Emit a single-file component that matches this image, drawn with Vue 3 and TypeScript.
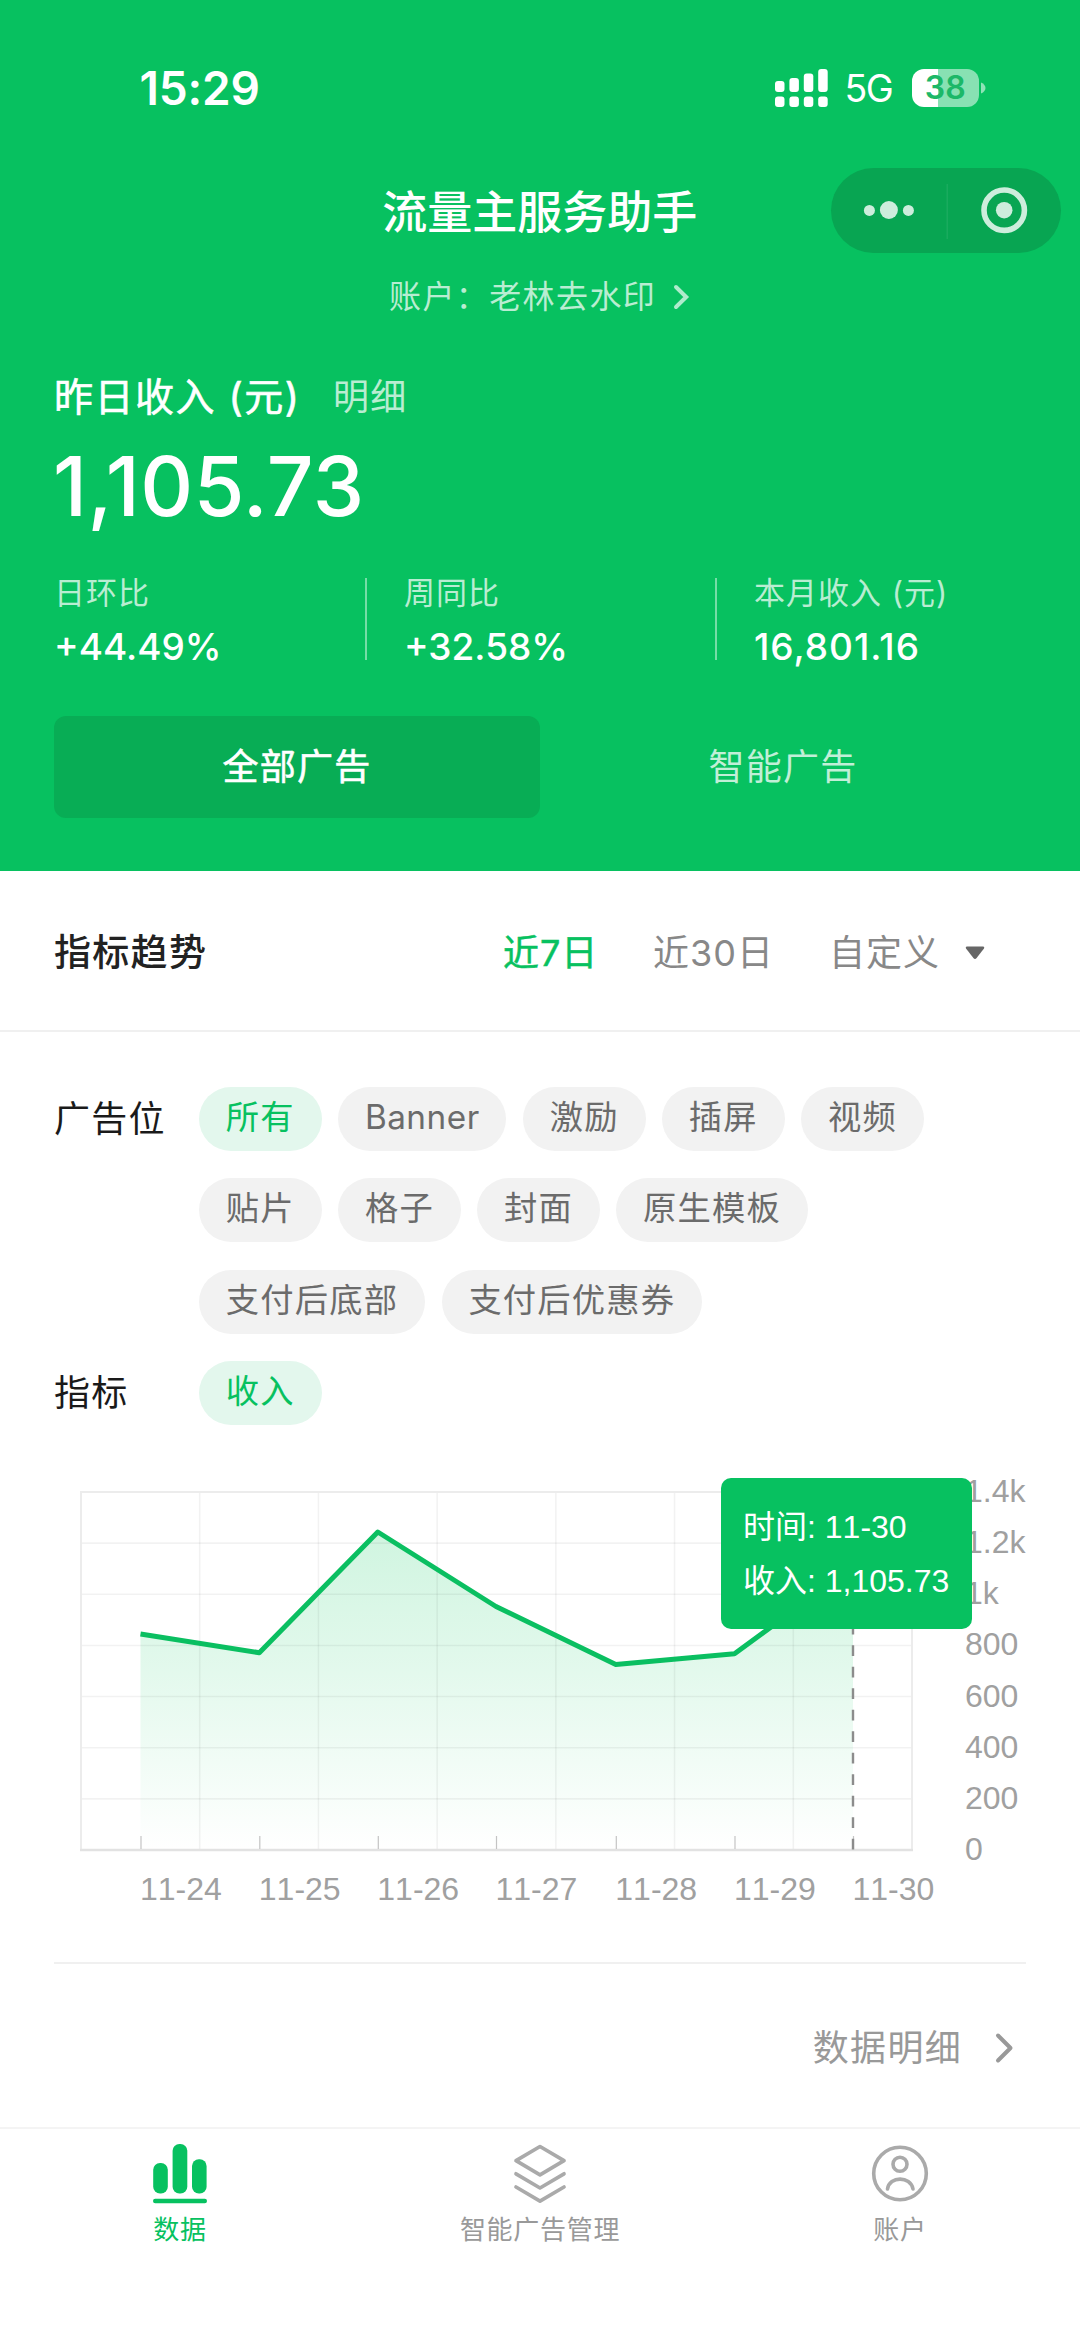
<script setup lang="ts">
interface Stat { label: string; value: string }
interface Point { day: string; x: number; y: number }

const stats: Stat[] = [
  { label: '日环比', value: '+44.49%' },
  { label: '周同比', value: '+32.58%' },
  { label: '本月收入 (元)', value: '16,801.16' },
]

const slotRows: string[][] = [
  ['所有', 'Banner', '激励', '插屏', '视频'],
  ['贴片', '格子', '封面', '原生模板'],
  ['支付后底部', '支付后优惠券'],
]
const activeSlot = '所有'

// Chart geometry, in the coordinates of the svg viewBox
const left = 81
const right = 912
const top = 32
const bottom = 390
const points: Point[] = [
  { day: '11-24', x: 140.5, y: 174 },
  { day: '11-25', x: 259.3, y: 192.7 },
  { day: '11-26', x: 377.8, y: 72 },
  { day: '11-27', x: 496, y: 146.5 },
  { day: '11-28', x: 615.8, y: 204.6 },
  { day: '11-29', x: 734.5, y: 193.7 },
  { day: '11-30', x: 853, y: 107 },
]
const yLabels: string[] = ['1.4k', '1.2k', '1k', '800', '600', '400', '200', '0']
const rowY = (i: number): number => top + (i * (bottom - top)) / 7
const colX = (i: number): number => left + (i * (right - left)) / 7
const linePath = points.map((p) => `${p.x},${p.y}`).join(' ')
const areaPath = `${points[0].x},${bottom} ${linePath} ${points[6].x},${bottom}`
</script>

<template>
  <div class="page">
    <header class="hero">
      <div class="status">
        <span class="clock">15:29</span>
        <div class="status-right">
          <svg class="signal" width="54" height="38" viewBox="0 0 54 38" fill="#fff">
            <rect x="0" y="12" width="9.5" height="11" rx="3" />
            <rect x="14.4" y="9" width="9.5" height="14" rx="3" />
            <rect x="28.8" y="4.5" width="9.5" height="18.5" rx="3" />
            <rect x="43.2" y="0" width="9.5" height="23" rx="3" />
            <rect x="0" y="27.5" width="9.5" height="10.5" rx="3" />
            <rect x="14.4" y="27.5" width="9.5" height="10.5" rx="3" />
            <rect x="28.8" y="27.5" width="9.5" height="10.5" rx="3" />
            <rect x="43.2" y="27.5" width="9.5" height="10.5" rx="3" />
          </svg>
          <span class="net">5G</span>
          <div class="battery"><span>38</span></div>
          <svg class="nub" width="5" height="12" viewBox="0 0 5 12"><path d="M0 0.5C6 3 6 9 0 11.5Z" fill="#fff" fill-opacity=".55" /></svg>
        </div>
      </div>

      <div class="nav">
        <h1>流量主服务助手</h1>
        <div class="capsule">
          <svg width="230" height="85" viewBox="0 0 230 85" fill="#fff" fill-opacity=".8">
            <circle cx="38.4" cy="42.4" r="5.5" />
            <circle cx="57.9" cy="42" r="9" />
            <circle cx="77.4" cy="42.4" r="5.5" />
            <rect x="115.5" y="16" width="1.5" height="55" fill-opacity=".07" />
            <circle cx="173.2" cy="42.2" r="20.2" fill="none" stroke="#fff" stroke-opacity=".8" stroke-width="5.6" />
            <circle cx="173.2" cy="42.2" r="8.3" />
          </svg>
        </div>
      </div>

      <div class="account">
        <span>账户：老林去水印</span>
        <svg width="18" height="28" viewBox="0 0 18 28"><path d="M3 4 13.2 14 3 24" fill="none" stroke="#fff" stroke-opacity=".68" stroke-width="4" stroke-linecap="round" /></svg>
      </div>

      <div class="income-head">
        <span class="income-title">昨日收入 (元)</span>
        <span class="income-link">明细</span>
      </div>
      <div class="income">1,105.73</div>

      <div class="stats">
        <div v-for="s in stats" :key="s.label" class="stat">
          <span class="stat-label">{{ s.label }}</span>
          <span class="stat-value">{{ s.value }}</span>
        </div>
      </div>

      <div class="tabs">
        <div class="tab on">全部广告</div>
        <div class="tab">智能广告</div>
      </div>
    </header>

    <section class="trend">
      <h2>指标趋势</h2>
      <span class="range on">近7日</span>
      <span class="range r30">近30日</span>
      <span class="range custom">自定义</span>
      <svg class="caret" width="20" height="14" viewBox="0 0 20 14"><path d="M2 .5H18Q20 1 18.8 2.8L11.6 12Q10 14 8.400 12L1.200 2.800Q0 1 2 .5Z" fill="#666" /></svg>
    </section>

    <section class="filters">
      <div class="filter">
        <span class="filter-label">广告位</span>
        <div class="chip-rows">
          <div v-for="(row, i) in slotRows" :key="i" class="chips">
            <span v-for="c in row" :key="c" class="chip" :class="{ on: c === activeSlot, latin: c === 'Banner' }">{{ c }}</span>
          </div>
        </div>
      </div>
      <div class="filter">
        <span class="filter-label">指标</span>
        <div class="chips"><span class="chip on">收入</span></div>
      </div>
    </section>

    <section class="chart">
      <svg width="1080" height="460" viewBox="0 0 1080 460">
        <defs>
          <linearGradient id="fill" gradientUnits="userSpaceOnUse" x1="0" y1="72" x2="0" y2="390">
            <stop offset="0" stop-color="#07c95c" stop-opacity=".19" />
            <stop offset=".4" stop-color="#07c95c" stop-opacity=".12" />
            <stop offset="1" stop-color="#07c95c" stop-opacity="0" />
          </linearGradient>
        </defs>
        <polygon :points="areaPath" fill="url(#fill)" />
        <g stroke="#000" stroke-opacity=".05" stroke-width="1.6">
          <line v-for="i in 6" :key="'h' + i" :x1="left" :x2="right" :y1="rowY(i)" :y2="rowY(i)" />
          <line v-for="i in 6" :key="'v' + i" :x1="colX(i)" :x2="colX(i)" :y1="top" :y2="bottom" />
        </g>
        <rect :x="left" :y="top" :width="right - left" :height="bottom - top" fill="none" stroke="#ececec" stroke-width="2" />
        <line :x1="left - 1" :x2="right + 1" :y1="bottom" :y2="bottom" stroke="#e2e2e2" stroke-width="2.4" />
        <g stroke="#c4c4c4" stroke-width="1.2">
          <line v-for="p in points" :key="p.day" :x1="p.x + 0.5" :x2="p.x + 0.5" y1="376" y2="389" />
        </g>
        <line x1="853" x2="853" y1="389.500" y2="107" stroke="#8c8c8c" stroke-width="2.4" stroke-dasharray="10.750 10.750" />
        <polyline :points="linePath" fill="none" stroke="#0abf61" stroke-width="5" stroke-linejoin="round" />
        <g class="axis">
          <text v-for="p in points" :key="p.day" :x="p.x - 0.5" y="440">{{ p.day }}</text>
          <text v-for="(t, i) in yLabels" :key="t" x="965" :y="rowY(i) + 10">{{ t }}</text>
        </g>
      </svg>
      <div class="tip">
        <div>时间: 11-30</div>
        <div>收入: 1,105.73</div>
      </div>
    </section>

    <div class="more">
      <span>数据明细</span>
      <svg width="22" height="34" viewBox="0 0 22 34"><path d="M4 4.500 16.500 17 4 29.500" fill="none" stroke="#999" stroke-width="4" stroke-linecap="round" stroke-linejoin="round" /></svg>
    </div>

    <nav class="bar">
      <div class="item on">
        <svg width="60" height="64" viewBox="0 0 60 64" fill="#07c160">
          <rect x="3.200" y="23" width="14.600" height="30.500" rx="6.800" />
          <rect x="22.600" y="4" width="14.700" height="49.500" rx="6.800" />
          <rect x="42" y="19.300" width="14.600" height="34.200" rx="6.800" />
          <rect x="3" y="58.800" width="54" height="4.400" rx="2.200" />
        </svg>
        <span>数据</span>
      </div>
      <div class="item">
        <svg width="60" height="64" viewBox="0 0 60 64" fill="none" stroke="#aaa" stroke-width="3.700" stroke-linecap="round" stroke-linejoin="round">
          <path d="M30 6.500 54 20.700 30 34.900 6 20.700Z" />
          <path d="M6 33.800 30 48 54 33.800" />
          <path d="M6 47 30 61.200 54 47" />
        </svg>
        <span>智能广告管理</span>
      </div>
      <div class="item">
        <svg width="60" height="64" viewBox="0 0 60 64" fill="none" stroke="#aaa" stroke-width="3.600" stroke-linecap="round">
          <circle cx="30" cy="33.500" r="26.300" />
          <circle cx="30" cy="24.300" r="7" />
          <path d="M17.500 49C19.500 35.800 40.500 35.800 43 49" />
        </svg>
        <span>账户</span>
      </div>
    </nav>
  </div>
</template>

<style>
body { background: #fff; }
</style>

<style scoped>
.page {
  width: 1080px;
  height: 2349px;
  background: #fff;
  font-family: Inter, "Noto Sans CJK SC", sans-serif;
  overflow: hidden;
  white-space: nowrap;
}
.page * { box-sizing: border-box; }
svg { display: block; flex: none; }
h1, h2 { margin: 0; }

.hero {
  height: 871px;
  background: #07c160;
  color: #fff;
}
.status {
  display: flex;
  justify-content: space-between;
  height: 168px;
  padding: 69px 94.500px 0 139.500px;
}
.clock { font-size: 46px; font-weight: 600; line-height: 38px; letter-spacing: -0.2px; }
.status-right { display: flex; height: 38px; }
.net { margin-left: 16px; width: 67px; font-size: 37.500px; line-height: 40px; letter-spacing: -1.500px; }
.battery {
  width: 67.500px;
  height: 38px;
  border-radius: 12px;
  background: linear-gradient(90deg, #fff 39%, rgba(255, 255, 255, .52) 39%);
  color: #1cb868;
  font-size: 32px;
  font-weight: 600;
  line-height: 38px;
  text-align: center;
}
.nub { margin: 13px 0 0 1.500px; }

.nav {
  display: flex;
  height: 85px;
  padding-right: 19.500px;
}
h1 {
  width: 830.500px;
  padding-left: 249px;
  font-size: 45px;
  font-weight: 500;
  line-height: 90px;
  text-align: center;
}
.capsule { width: 230px; height: 85px; border-radius: 43px; background: #08a552; }

.account {
  display: flex;
  align-items: center;
  height: 40px;
  margin-top: 24px;
  padding-left: 389px;
  font-size: 32px;
  line-height: 40px;
  letter-spacing: 1.400px;
  color: rgba(255, 255, 255, .72);
}
.account svg { margin-left: 17px; }

.income-head {
  display: flex;
  height: 60px;
  margin-top: 50px;
  padding-left: 54px;
  line-height: 60px;
}
.income-title { width: 279px; font-size: 39px; letter-spacing: 1.500px; -webkit-text-stroke: .6px #fff; }
.income-link { font-size: 36px; letter-spacing: 1.300px; color: rgba(255, 255, 255, .72); }
.income { height: 96px; margin-top: 12px; padding-left: 53px; font-size: 82px; font-weight: 500; line-height: 96px; letter-spacing: .5px; }

.stats { display: flex; margin-top: 43px; padding-left: 54px; height: 82px; }
.stat { display: flex; flex-direction: column; width: 350px; }
.stat + .stat { padding-left: 37.500px; border-left: 2.500px solid rgba(255, 255, 255, .45); width: 350px; }
.stat:first-child { width: 310.500px; }
.stat-label { height: 48px; margin-top: -9.500px; font-size: 31px; line-height: 48px; letter-spacing: 1px; color: rgba(255, 255, 255, .72); }
.stat-value { height: 48px; margin-top: 6.500px; font-size: 37px; font-weight: 500; line-height: 48px; }
.stat:last-child .stat-value { letter-spacing: 1px; }

.tabs { display: flex; margin-top: 56px; padding: 0 54px; }
.tab {
  flex: 1;
  height: 102px;
  border-radius: 12px;
  font-size: 36px;
  line-height: 102px;
  letter-spacing: 1.300px;
  text-align: center;
  color: rgba(255, 255, 255, .75);
}
.tab.on { background: #08ad55; color: #fff; -webkit-text-stroke: .6px #fff; }

.trend {
  display: flex;
  align-items: center;
  height: 161px;
  padding: 4px 0 0 54px;
  border-bottom: 2px solid #f0f0f0;
  font-size: 36px;
  letter-spacing: 1px;
  line-height: 48px;
}
h2 { width: 449px; font-size: 37px; font-weight: 500; letter-spacing: 1.300px; color: #222; }
.range { width: 150px; color: #888; }
.range.on { color: #07c160; -webkit-text-stroke: .5px #07c160; }
.range.r30 { width: 176px; }
.range.custom { width: 136px; }

.filters { padding: 55px 0 0 54px; }
.filter { display: flex; color: #1a1a1a; }
.filter-label { width: 145px; font-size: 36px; line-height: 65px; letter-spacing: 1.300px; }
.chips { display: flex; gap: 16.500px; height: 91.300px; }
.chip {
  height: 64px;
  padding: 0 26.800px;
  border-radius: 32px;
  background: #f2f2f2;
  color: #6b6b6b;
  font-size: 33.300px;
  line-height: 61px;
  letter-spacing: 1.200px;
}
.chip.latin { letter-spacing: .5px; }
.chip.on { background: #e3f7ed; color: #07c160; }

.chart { position: relative; height: 502px; margin-top: 8px; }
.axis { font-family: "Liberation Sans", sans-serif; font-size: 32px; fill: #a0a0a0; font-kerning: none; }
.tip {
  position: absolute;
  left: 721px;
  top: 18px;
  width: 251px;
  height: 150.500px;
  padding: 22px 0 0 22px;
  border-radius: 10px;
  background: #07c160;
  color: #fff;
  font-family: "Liberation Sans", "Noto Sans CJK SC", sans-serif;
  font-size: 32px;
  line-height: 54px;
  font-kerning: none;
}
.tip div { height: 54px; }

.more {
  display: flex;
  align-items: center;
  justify-content: flex-end;
  height: 165px;
  margin: 0 54px;
  padding: 5px 10px 0 0;
  border-top: 2px solid #f0f0f0;
  color: #999;
  font-size: 36px;
  line-height: 48px;
  letter-spacing: 1.300px;
}
.more svg { margin-left: 32px; }

.bar { display: flex; height: 222px; border-top: 2px solid #f4f4f4; padding-top: 11px; }
.item { display: flex; flex: 1; flex-direction: column; align-items: center; color: #999; font-size: 26px; line-height: 36px; letter-spacing: .7px; }
.item span { margin-top: 8px; }
.item.on { color: #07c160; }
</style>
